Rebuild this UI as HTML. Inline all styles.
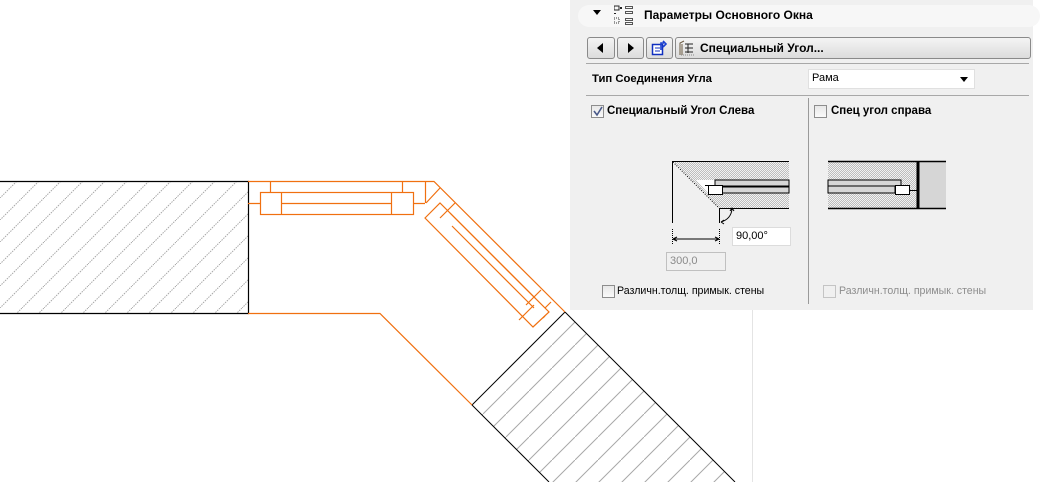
<!DOCTYPE html>
<html><head><meta charset="utf-8"><style>
body{margin:0;width:1046px;height:482px;background:#fff;position:relative;overflow:hidden;font-family:"Liberation Sans",Arial,sans-serif;}
.a{position:absolute}
.panel{left:570px;top:0;width:463px;height:310px;background:#f0f0f0}
.b{font-weight:bold;font-size:11px;color:#000}
.btn{position:absolute;top:37px;height:20px;border:1px solid #8a8a8a;border-radius:3px;background:linear-gradient(#f4f4f4,#dcdcdc)}
.cb{position:absolute;width:11px;height:11px;border:1px solid #8d8d8d;background:linear-gradient(#e8e8e8,#fafafa)}
.inp{position:absolute;background:#fff;border:1px solid #c8c8c8;font-size:11px;padding-left:3px;line-height:17px}
</style></head><body>
<svg class="a" style="left:0;top:0" width="1046" height="482">
<defs>
<pattern id="h" width="22" height="22" patternUnits="userSpaceOnUse"><path d="M-2 24L24 -2" stroke="#a8a8a8" stroke-width="1" stroke-dasharray="1.5 1"/></pattern>
<pattern id="h2" width="23" height="23" patternUnits="userSpaceOnUse"><path d="M-2 25L25 -2" stroke="#a8a8a8" stroke-width="1"/></pattern>
</defs>
<rect x="0" y="181" width="248" height="132" fill="url(#h)"/>
<path d="M0 181.5H248.5V313.5H0" fill="none" stroke="#000" stroke-width="1.2"/>
<polygon points="565,312 472,405 549,482 735,482" fill="url(#h2)"/>
<path d="M565 312L472 405L549 482M565 312L735 482" fill="none" stroke="#000"/>
<g fill="none" stroke="#f07010" stroke-width="1.2">
<path d="M248 181.5H434L565 312"/>
<path d="M270.5 181V192M402.5 181V192M425.5 181V203M248 203.5H260M413 203.5H425"/>
<rect x="260.5" y="192.5" width="153" height="22"/>
<path d="M281.5 192V214M391.5 192V214M281 203.5H391"/>
<path d="M248 313.5H380L472 405"/>
<path d="M426 203L440 188M425 218L440 203L549 312L533 327Z"/>
<path d="M440 218L455 203M526 305L541 290M519 320L534 305M450 213L535 298M452 226L534 308M545 308L551 302M545 316L543 318"/>
</g>
<line x1="752.5" y1="310" x2="752.5" y2="482" stroke="#e4e4e4"/>
</svg>
<div class="a panel"></div>
<div class="a" style="left:578px;top:5px;width:462px;height:22px;border-radius:11px;background:#f7f7f7"></div>
<div class="a" style="left:593px;top:10px;width:0;height:0;border-left:4px solid transparent;border-right:4px solid transparent;border-top:5px solid #000"></div>
<svg class="a" style="left:614px;top:5px" width="20" height="22"><g fill="#222"><rect x="0" y="1" width="5" height="4" fill="none" stroke="#222"/><rect x="6" y="2" width="2" height="2"/><rect x="0" y="8" width="2" height="1"/><rect x="0" y="13" width="5" height="5" fill="none" stroke="#333" stroke-dasharray="1 1"/></g><g fill="none" stroke="#555"><rect x="11.5" y="1.5" width="7" height="2"/><rect x="11.5" y="6.5" width="7" height="2"/><rect x="11.5" y="13.5" width="7" height="2"/><rect x="11.5" y="17.5" width="7" height="2"/></g></svg>
<div class="a b" style="left:644px;top:8px;font-size:12px">Параметры Основного Окна</div>
<div class="btn" style="left:587px;width:26px"><div class="a" style="left:9px;top:5px;border-top:5px solid transparent;border-bottom:5px solid transparent;border-right:6px solid #000"></div></div>
<div class="btn" style="left:617px;width:25px"><div class="a" style="left:10px;top:5px;border-top:5px solid transparent;border-bottom:5px solid transparent;border-left:6px solid #000"></div></div>
<div class="btn" style="left:646px;width:25px"><svg class="a" style="left:4px;top:2px" width="18" height="16"><rect x="1.5" y="4.5" width="10" height="10" fill="#fff" stroke="#1030c0" stroke-width="1.5"/><path d="M4 8h5M4 11h5" stroke="#1030c0"/><path d="M10 10V3h3M12 1l3 3l-3 3" fill="none" stroke="#1a40d0" stroke-width="1.6"/></svg></div>
<div class="btn" style="left:675px;width:354px"><svg class="a" style="left:3px;top:2px" width="16" height="16"><path d="M1 15V3l4-2M3 15V4" stroke="#6b5a40" fill="none"/><path d="M6 4h8M9 4v9M6 8h8M6 12h8" stroke="#222" fill="none"/><path d="M2 15h13" stroke="#888" stroke-dasharray="1 1"/></svg><div class="a b" style="left:24px;top:3px;font-size:12px">Специальный Угол...</div></div>
<div class="a" style="left:586px;top:63px;width:443px;height:1px;background:#a8a8a8"></div>
<div class="a b" style="left:592px;top:73px;font-size:11.3px">Тип Соединения Угла</div>
<div class="inp" style="left:808px;top:69px;width:162px;height:18px;border-color:#e0e0e0">Рама<div class="a" style="right:6px;top:7px;border-left:4px solid transparent;border-right:4px solid transparent;border-top:5px solid #000"></div></div>
<div class="a" style="left:586px;top:95px;width:443px;height:1px;background:#a8a8a8"></div>
<div class="a" style="left:808px;top:98px;width:1px;height:206px;background:#9a9a9a"></div>
<div class="cb" style="left:591px;top:105px"><svg width="11" height="11" class="a"><path d="M2 5l3 4l5-8" fill="none" stroke="#4a5a8a" stroke-width="1.6"/></svg></div>
<div class="a b" style="left:607px;top:105px;font-size:11.5px">Специальный Угол Слева</div>
<div class="cb" style="left:814px;top:105px"></div>
<div class="a b" style="left:831px;top:105px;font-size:11.5px">Спец угол справа</div>
<svg class="a" style="left:660px;top:155px" width="300" height="95">
<defs><pattern id="d" width="2" height="2" patternUnits="userSpaceOnUse"><rect width="2" height="2" fill="#f2f2f2"/><rect width="1" height="1" fill="#bdbdbd"/><rect x="1" y="1" width="1" height="1" fill="#bdbdbd"/></pattern></defs>
<polygon points="13,6 129,6 129,53 59,53" fill="url(#d)"/>
<polygon points="36,25 129,25 129,38 48,38" fill="#fff"/>
<rect x="55" y="25" width="74" height="6" fill="#d6d6d6" stroke="#000"/>
<rect x="62" y="32" width="67" height="6" fill="#d6d6d6" stroke="#000"/>
<rect x="48.5" y="30.5" width="14" height="9" fill="#fff" stroke="#000"/>
<path d="M45 30.5H49" stroke="#000"/>
<path d="M12.5 68V6.5H129M59.5 68V53.5H129" fill="none" stroke="#000"/>
<path d="M13 7L59 53" stroke="#000" stroke-dasharray="1 1.5"/>
<path d="M61 67q10-3 11-13M70 56l2-3l2 3M61 67l3-2M61 67l3 2" fill="none" stroke="#000"/>
<path d="M12.5 74V90M59.5 74V90" stroke="#000" stroke-dasharray="1 1"/>
<path d="M13 84H59M13 84l4-2M13 84l4 2M59 84l-4-2M59 84l-4 2" stroke="#000" fill="none"/>
<rect x="168" y="6" width="90" height="47" fill="url(#d)"/>
<rect x="168" y="25" width="65" height="13" fill="#fff"/>
<rect x="168" y="25" width="73" height="6" fill="#d6d6d6" stroke="#000"/>
<rect x="168" y="31" width="67" height="7" fill="#d6d6d6" stroke="#000"/>
<rect x="235.5" y="30.5" width="14" height="9" fill="#fff" stroke="#000"/>
<path d="M249 35.5H258" stroke="#000"/>
<rect x="258" y="6" width="28" height="47" fill="#d6d6d6"/>
<path d="M168 6.5H286M168 53.5H286" stroke="#000" stroke-width="1.5"/>
<path d="M258 6V54" stroke="#000" stroke-width="3"/>
</svg>
<div class="inp" style="left:732px;top:227px;width:54px;height:17px;border-color:#dcdcdc">90,00°</div>
<div class="inp" style="left:666px;top:252px;width:55px;height:17px;background:#f0f0f0;color:#8a8a8a;border-color:#c0c0c0">300,0</div>
<div class="cb" style="left:602px;top:285px"></div>
<div class="a" style="left:617px;top:285px;font-size:10.6px">Различн.толщ. примык. стены</div>
<div class="cb" style="left:823px;top:285px;border-color:#c4c4c4;background:#f0f0f0"></div>
<div class="a" style="left:839px;top:285px;font-size:10.6px;color:#8d8d8d">Различн.толщ. примык. стены</div>
</body></html>
